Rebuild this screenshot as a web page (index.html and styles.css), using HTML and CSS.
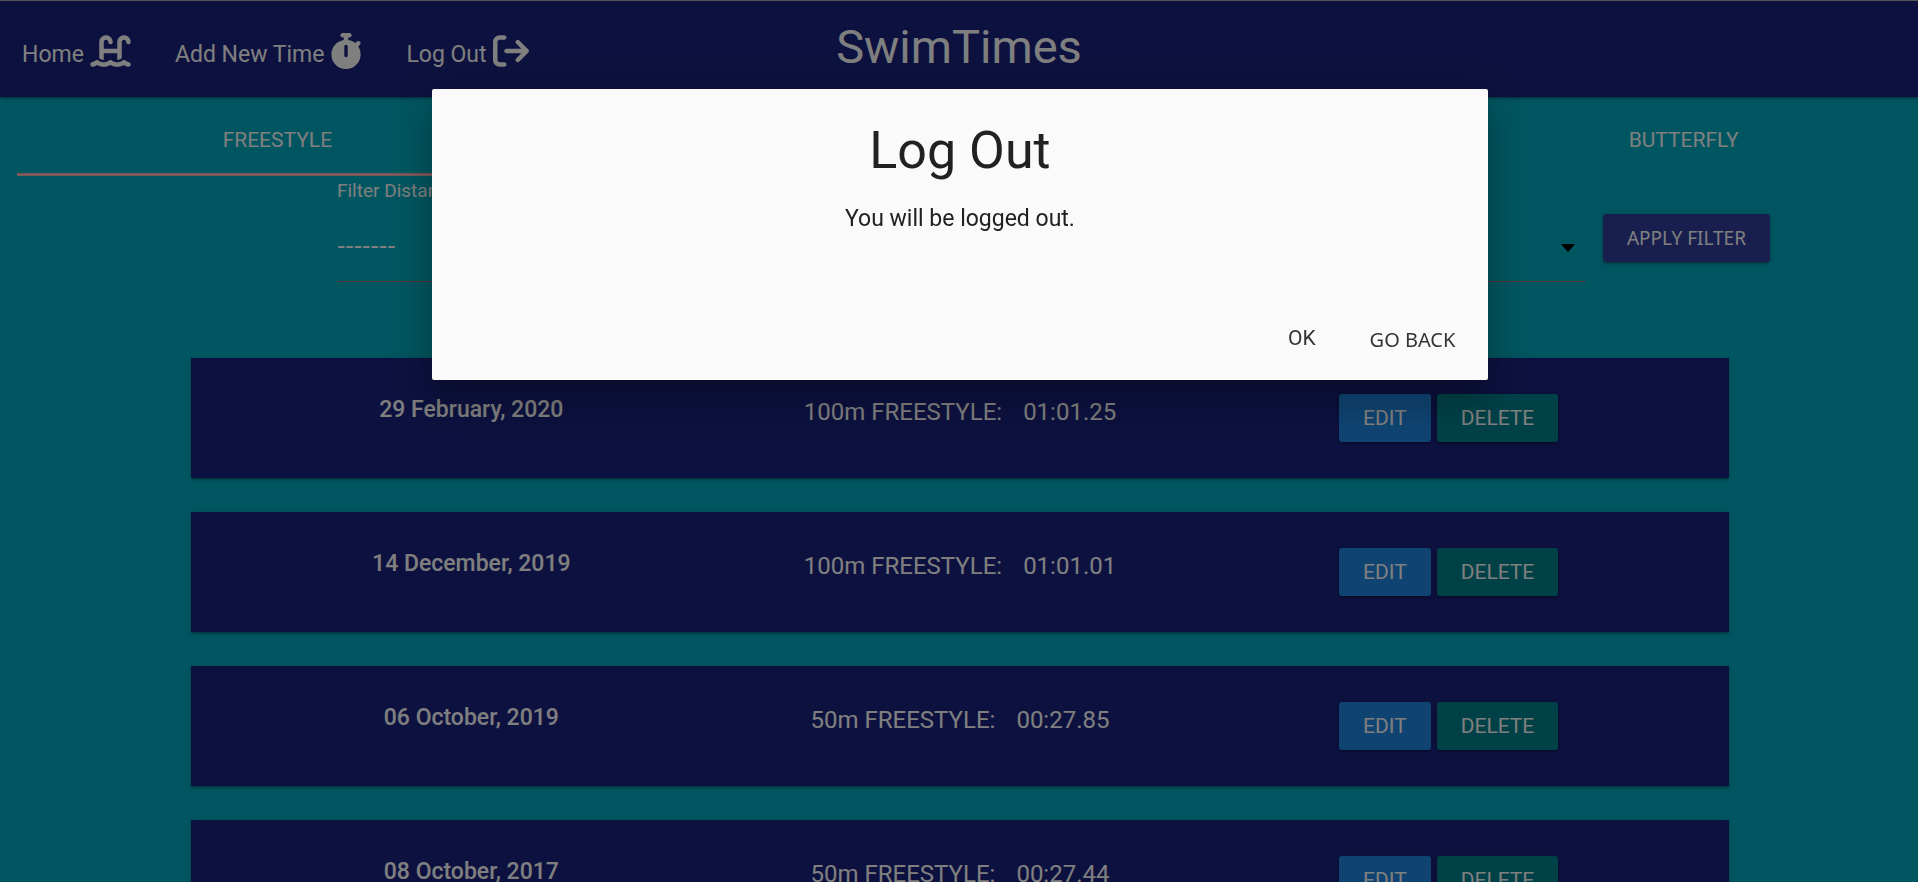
FILE: index.html
```html
<!DOCTYPE html>
<html lang="en">
<head>
<meta charset="utf-8">
<title>SwimTimes</title>
<link rel="stylesheet" href="styles.css">
</head>
<body>
<header class="navbar">
  <nav class="nav-links">
    <a class="nav-link" href="#home"><span>Home</span>
      <svg class="nav-icon nav-icon-wide" viewBox="0 0 576 512" aria-hidden="true"><path d="M128 127.7C128 74.9 170.9 32 223.7 32c48.3 0 89 36 95 83.9l1 8.2c2.2 17.5-10.2 33.5-27.8 35.7s-33.5-10.2-35.7-27.8l-1-8.2c-2-15.9-15.5-27.8-31.5-27.8c-17.5 0-31.7 14.2-31.7 31.7V224H384V127.7C384 74.9 426.9 32 479.7 32c48.3 0 89 36 95 83.9l1 8.2c2.2 17.5-10.2 33.5-27.8 35.7s-33.5-10.2-35.7-27.8l-1-8.2c-2-15.9-15.5-27.8-31.5-27.8c-17.5 0-31.7 14.2-31.7 31.7V361c-1.6 1-3.3 2-4.8 3.1c-18 12.4-40.1 20.3-59.2 20.3h0V288H192v96.5c-19 0-41.2-7.9-59.1-20.3c-1.6-1.1-3.2-2.2-4.9-3.1V127.7zM306.5 389.9C329 405.4 356.5 416 384 416c26.9 0 55.4-10.8 77.4-26.1l0 0c11.9-8.5 28.1-7.8 39.2 1.7c14.4 11.9 32.5 21 50.6 25.2c17.2 4 27.9 21.2 23.9 38.4s-21.2 27.9-38.4 23.9c-24.5-5.7-44.9-16.5-58.2-25C449.5 469.7 417 480 384 480c-31.9 0-60.6-9.9-80.4-18.9c-5.8-2.7-11.1-5.3-15.6-7.7c-4.5 2.4-9.7 5.1-15.6 7.7c-19.8 9-48.5 18.9-80.4 18.9c-33 0-65.5-10.3-94.5-25.8c-13.4 8.4-33.7 19.3-58.2 25c-17.2 4-34.4-6.7-38.4-23.9s6.7-34.4 23.9-38.4c18.1-4.2 36.2-13.3 50.6-25.2c11.1-9.4 27.3-10.1 39.2-1.7l0 0C136.7 405.2 165.1 416 192 416c27.5 0 55-10.6 77.5-26.1c11.1-7.9 25.9-7.9 37 0z"/></svg>
    </a>
    <a class="nav-link" href="#add"><span>Add New Time</span>
      <svg class="nav-icon nav-icon-narrow" viewBox="0 0 448 512" aria-hidden="true"><path d="M176 0c-17.7 0-32 14.3-32 32s14.3 32 32 32h16V98.4C92.3 113.8 16 200 16 304c0 114.9 93.1 208 208 208s208-93.1 208-208c0-41.8-12.3-80.7-33.5-113.2l24.1-24.1c12.5-12.5 12.5-32.8 0-45.3s-32.8-12.5-45.3 0L355.7 143c-28.1-23-62.2-38.8-99.7-44.6V64h16c17.7 0 32-14.3 32-32s-14.3-32-32-32H176zm72 192V320c0 13.3-10.7 24-24 24s-24-10.7-24-24V192c0-13.3 10.7-24 24-24s24 10.7 24 24z"/></svg>
    </a>
    <a class="nav-link" href="#logout"><span>Log Out</span>
      <svg class="nav-icon" viewBox="0 0 512 512" aria-hidden="true"><path d="M502.6 278.6c12.5-12.5 12.5-32.8 0-45.3l-128-128c-12.5-12.5-32.8-12.5-45.3 0s-12.5 32.8 0 45.3L402.7 224H192c-17.7 0-32 14.3-32 32s14.3 32 32 32H402.7l-73.4 73.4c-12.5 12.5-12.5 32.8 0 45.3s32.8 12.5 45.3 0l128-128zM160 96c17.7 0 32-14.3 32-32s-14.3-32-32-32H96C43 32 0 75 0 128V384c0 53 43 96 96 96h64c17.7 0 32-14.3 32-32s-14.3-32-32-32H96c-17.7 0-32-14.3-32-32V128c0-17.7 14.3-32 32-32h64z"/></svg>
    </a>
  </nav>
  <a class="brand" href="#home">SwimTimes</a>
</header>

<main>
  <nav class="tabs">
    <a class="tab tab-active" href="#freestyle">FREESTYLE</a>
    <a class="tab" href="#backstroke">BACKSTROKE</a>
    <a class="tab" href="#breaststroke">BREASTSTROKE</a>
    <a class="tab" href="#butterfly">BUTTERFLY</a>
  </nav>

  <form class="filter">
    <div class="field">
      <label class="field-label" for="distance">Filter Distance</label>
      <div class="select-wrap">
        <select class="select" id="distance"><option>-------</option></select>
        <svg class="caret" viewBox="0 0 14 8" aria-hidden="true"><path d="M0 0h14L7 8z"/></svg>
      </div>
    </div>
    <button class="btn btn-apply" type="button">APPLY FILTER</button>
  </form>

  <section class="times">
    <article class="card">
      <div class="date">29 February, 2020</div>
      <div class="swim"><span>100m FREESTYLE:</span><span>01:01.25</span></div>
      <div class="actions"><button class="btn btn-edit">EDIT</button><button class="btn btn-delete">DELETE</button></div>
    </article>
    <article class="card">
      <div class="date">14 December, 2019</div>
      <div class="swim"><span>100m FREESTYLE:</span><span>01:01.01</span></div>
      <div class="actions"><button class="btn btn-edit">EDIT</button><button class="btn btn-delete">DELETE</button></div>
    </article>
    <article class="card">
      <div class="date">06 October, 2019</div>
      <div class="swim"><span>50m FREESTYLE:</span><span>00:27.85</span></div>
      <div class="actions"><button class="btn btn-edit">EDIT</button><button class="btn btn-delete">DELETE</button></div>
    </article>
    <article class="card">
      <div class="date">08 October, 2017</div>
      <div class="swim"><span>50m FREESTYLE:</span><span>00:27.44</span></div>
      <div class="actions"><button class="btn btn-edit">EDIT</button><button class="btn btn-delete">DELETE</button></div>
    </article>
  </section>
</main>

<div class="overlay">
  <div class="modal" role="dialog" aria-modal="true" aria-labelledby="modal-title">
    <div class="modal-content">
      <h4 class="modal-title" id="modal-title">Log Out</h4>
      <p class="modal-text">You will be logged out.</p>
    </div>
    <div class="modal-footer">
      <a class="modal-action" href="#ok">OK</a>
      <button class="modal-action modal-back" type="button">GO BACK</button>
    </div>
  </div>
</div>
</body>
</html>
```
FILE: styles.css
```css
* { box-sizing: border-box; }

:root {
  --shadow: 0 2px 2px 0 rgba(0, 0, 0, .14), 0 3px 1px -2px rgba(0, 0, 0, .12), 0 1px 5px 0 rgba(0, 0, 0, .2);
}

body {
  margin: 0;
  height: 100vh;
  overflow: hidden;
  background: #00acc1;
  color: #fff;
  font: 24px/36px Roboto, sans-serif;
}

a { color: inherit; text-decoration: none; }

.navbar {
  display: grid;
  grid-template-columns: 1fr auto 1fr;
  align-items: center;
  height: 97px;
  padding: 0 22px;
  border-top: 1px solid #aaa;
  background: #1a237e;
  box-shadow: var(--shadow);
}

.nav-links { display: flex; gap: 44px; }

.nav-link {
  display: flex;
  align-items: flex-end;
  gap: 6px;
  font-size: 23px;
}

.nav-icon {
  width: 36px;
  height: 36px;
  margin-bottom: 4px;
  fill: currentColor;
}
.nav-icon-wide { width: 41px; }
.nav-icon-narrow { width: 32px; }
.nav-links { padding-top: 8px; }

.brand { font-size: 47px; line-height: 90px; padding-bottom: 4px; }

.tabs {
  display: flex;
  position: relative;
  padding-left: 43px;
  font-size: 21px;
}
.tabs::after {
  content: "";
  position: absolute;
  left: 17px;
  bottom: 0;
  width: 25%;
  height: 3px;
  background: #f6b2b5;
}
.tab { flex: 1; padding-top: 1px; text-align: center; line-height: 84px; height: 79px; }

.filter {
  display: flex;
  align-items: flex-start;
  gap: 17px;
  padding: 0 148px 0 337px;
}
.field { flex: 1; border-bottom: 1px solid #a16c78; }
.field-label { display: block; font-size: 19px; line-height: 30px; }
.select-wrap { display: flex; align-items: center; height: 75px; }
.select {
  flex: 1;
  appearance: none;
  padding: 0;
  border: 0;
  background: none;
  color: #fff;
  font: 26px/36px "Noto Sans", sans-serif;
}
.caret { width: 14px; height: 8px; margin: 8px 11px 0 0; fill: #000; }

.btn {
  height: 48px;
  padding: 0 24px;
  border: 0;
  border-radius: 3px;
  color: #fff;
  font: 21px/48px Roboto, sans-serif;
  box-shadow: var(--shadow);
}
.btn-apply { margin-top: 38px; background: #303f9f; font: 19px/48px "Noto Sans", sans-serif; }
.btn-edit { background: #1e88e5; }
.btn-delete { background: #00838f; }

.times {
  display: grid;
  gap: 34px;
  padding: 76px 189px 0 191px;
}
.card {
  display: grid;
  grid-template-columns: repeat(3, 1fr);
  padding: 36px;
  height: 120px;
  background: #1a237e;
  text-align: center;
  box-shadow: var(--shadow);
}
.date { font-size: 23px; font-weight: 500; line-height: 32px; }
.swim { display: flex; justify-content: center; gap: 21px; }
.actions { display: flex; justify-content: center; gap: 6px; }

.overlay {
  position: fixed;
  inset: 0;
  background: rgba(0, 0, 0, .5);
}
.modal {
  margin: 89px 22.4% 0 22.5%;
  border-radius: 2px;
  background: #fafafa;
  color: #212121;
  box-shadow: 0 24px 38px 3px rgba(0, 0, 0, .14), 0 9px 46px 8px rgba(0, 0, 0, .12), 0 11px 15px -7px rgba(0, 0, 0, .2);
}
.modal-content { padding: 24px 24px 79px; text-align: center; }
.modal-title { margin: 0 0 12px; font-size: 52px; font-weight: 400; line-height: 76px; }
.modal-text { margin: 0; font-size: 23px; }
.modal-footer {
  display: flex;
  justify-content: flex-end;
  gap: 54px;
  padding: 0 33px 16px;
}
.modal-action { font-size: 21px; line-height: 44px; color: #343434; }
.modal-back {
  height: 48px;
  padding: 0;
  border: 0;
  background: none;
  font: 20px/48px "Noto Sans", sans-serif;
}
```
